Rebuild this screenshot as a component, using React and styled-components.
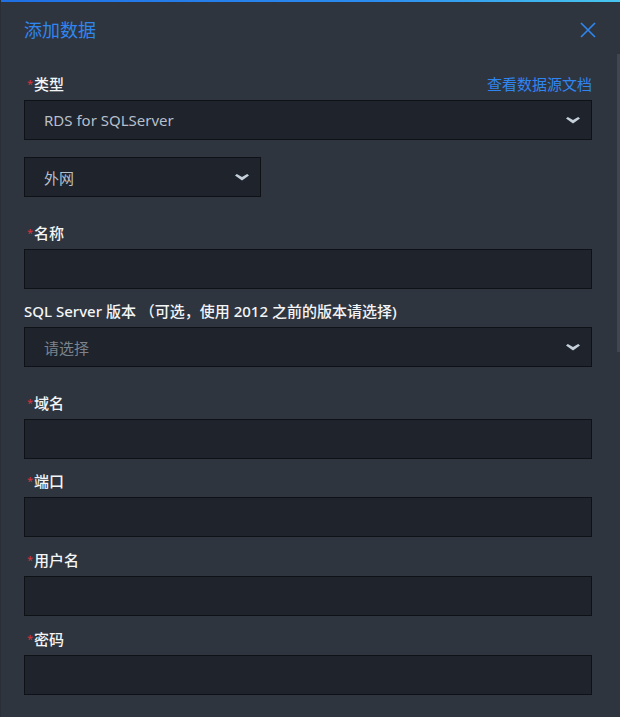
import React from 'react';
import styled, { createGlobalStyle } from 'styled-components';

const GlobalStyle = createGlobalStyle`
  html, body {
    margin: 0;
    padding: 0;
    background: #2f353f;
  }
  body {
    font-family: 'Noto Sans', 'Noto Sans CJK SC', sans-serif;
  }
`;

const Modal = styled.div`
  position: relative;
  width: 620px;
  min-height: 717px;
  box-sizing: border-box;
  background: #2f353f;
  border-left: 1px solid #2a2f37;
  overflow: hidden;

  &::before {
    content: '';
    display: block;
    height: 2px;
    background: linear-gradient(90deg, #1f6fe5 0%, #2b8cf0 60%, #48c6ee 100%);
  }
`;

const Header = styled.div`
  display: flex;
  align-items: center;
  justify-content: space-between;
  height: 56px;
  padding: 0 22px 0 23px;
`;

const Title = styled.h2`
  margin: 0;
  font-size: 18px;
  font-weight: 400;
  line-height: 24px;
  color: #2f86f0;
`;

const Close = styled.button`
  display: flex;
  align-items: center;
  justify-content: center;
  width: 20px;
  height: 20px;
  padding: 0;
  border: none;
  background: none;
  cursor: pointer;
`;

const Body = styled.div`
  padding: 15px 28px 24px 23px;
`;

const Item = styled.div`
  margin-bottom: ${(p) => p.$gap}px;
`;

const LabelRow = styled.div`
  display: flex;
  align-items: center;
  justify-content: space-between;
  height: 22px;
  margin-bottom: 5px;
`;

const Label = styled.label`
  font-size: 15px;
  font-weight: 500;
  line-height: 22px;
  color: #f4f5f7;
  white-space: nowrap;
`;

const Star = styled.span`
  display: inline-block;
  padding-left: 3px;
  margin-right: 1px;
  font-size: 11px;
  font-weight: 400;
  line-height: 11px;
  vertical-align: 2px;
  color: #d8343c;
`;

const DocLink = styled.a`
  font-size: 15px;
  line-height: 22px;
  color: #2f86f0;
  text-decoration: none;
  cursor: pointer;
`;

const Box = styled.div`
  display: flex;
  align-items: center;
  justify-content: space-between;
  box-sizing: border-box;
  width: ${(p) => (p.$width ? `${p.$width}px` : '100%')};
  height: 40px;
  padding: 0 11px 0 19px;
  background: #1e232c;
  border: 1px solid #0e1115;
`;

const Input = styled.input`
  flex: 1;
  min-width: 0;
  height: 100%;
  padding: 0;
  border: none;
  outline: none;
  background: transparent;
  font-family: inherit;
  font-size: 15px;
  color: #c3cad3;
`;

const Value = styled.span`
  font-size: 15px;
  color: ${(p) => (p.$placeholder ? '#7c838d' : '#b7bfca')};
`;

const ScrollThumb = styled.div`
  position: absolute;
  top: 54px;
  right: 0;
  width: 3px;
  height: 298px;
  background: #3f4652;
`;

function Chevron() {
  return (
    <svg width="14" height="7" viewBox="0 0 14 7">
      <polygon points="0,1.6 1.8,0 7,3 12.2,0 14,1.6 7,6.4" fill="#c6d0db" />
    </svg>
  );
}

function Select({ value, placeholder, width }) {
  return (
    <Box $width={width}>
      <Value $placeholder={!value}>{value || placeholder}</Value>
      <Chevron />
    </Box>
  );
}

function Field({ label, required, gap = 12 }) {
  return (
    <Item $gap={gap}>
      <LabelRow>
        <Label>
          {required && <Star>*</Star>}
          {label}
        </Label>
      </LabelRow>
      <Box>
        <Input type="text" />
      </Box>
    </Item>
  );
}

export default function App() {
  return (
    <>
      <GlobalStyle />
      <Modal>
        <Header>
          <Title>添加数据</Title>
          <Close aria-label="关闭">
            <svg width="16" height="16" viewBox="0 0 16 16">
              <path d="M1 1 L15 15 M15 1 L1 15" stroke="#2f86f0" strokeWidth="1.6" />
            </svg>
          </Close>
        </Header>
        <Body>
          <Item $gap={17}>
            <LabelRow>
              <Label>
                <Star>*</Star>类型
              </Label>
              <DocLink>查看数据源文档</DocLink>
            </LabelRow>
            <Select value="RDS for SQLServer" />
          </Item>
          <Item $gap={25}>
            <Select value="外网" width={237} />
          </Item>
          <Field label="名称" required gap={11} />
          <Item $gap={25}>
            <LabelRow>
              <Label>SQL Server 版本 （可选，使用 2012 之前的版本请选择)</Label>
            </LabelRow>
            <Select placeholder="请选择" />
          </Item>
          <Field label="域名" required gap={11} />
          <Field label="端口" required gap={12} />
          <Field label="用户名" required gap={12} />
          <Field label="密码" required gap={12} />
        </Body>
        <ScrollThumb />
      </Modal>
    </>
  );
}
